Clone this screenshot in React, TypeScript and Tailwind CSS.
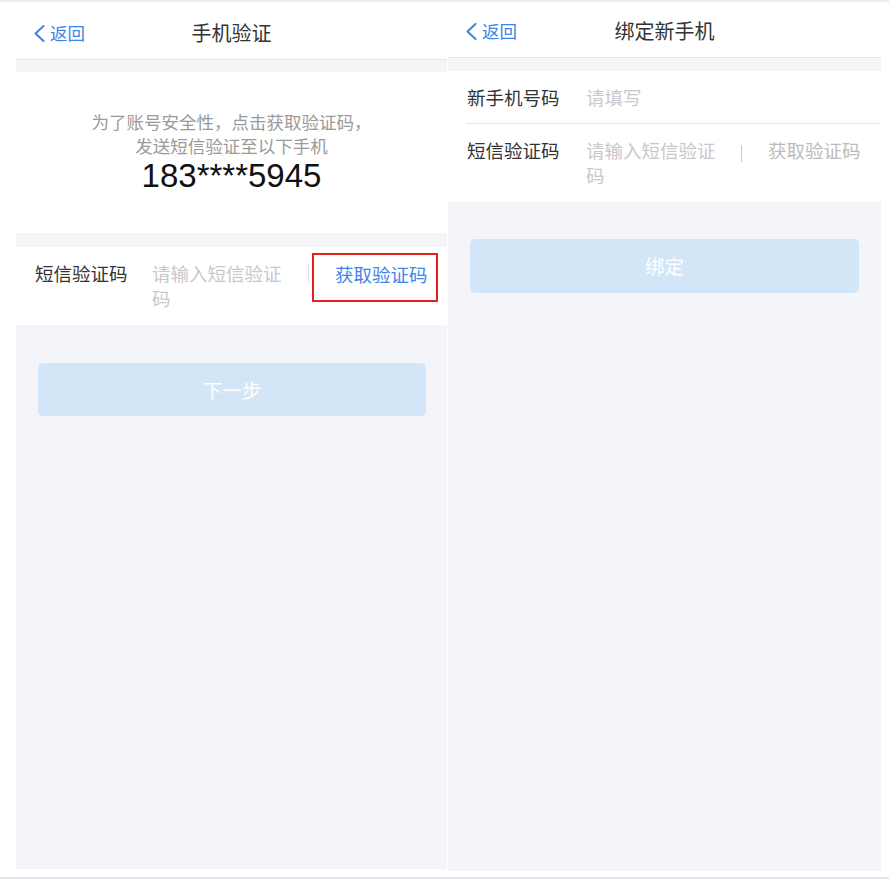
const font = { fontFamily: '"Noto Sans CJK SC", "Noto Sans", sans-serif' };

function BackButton() {
  return (
    <div className="flex items-center gap-[4px] text-[17.5px] text-[#3d85e8]">
      <svg width="13" height="17" viewBox="0 0 13 17" fill="none">
        <polyline points="10.5,1 2.5,8.5 10.5,16" stroke="#3d85e8" strokeWidth="2" strokeLinecap="round" strokeLinejoin="round" />
      </svg>
      <span>返回</span>
    </div>
  );
}

function Header({ title, h, pt }: { title: string; h: string; pt: string }) {
  return (
    <div className={`relative flex items-center bg-white ${h} ${pt}`}>
      <div className="pl-[17px]">
        <BackButton />
      </div>
      <div className="absolute inset-x-0 text-center text-[20px] text-[#333] pointer-events-none">{title}</div>
    </div>
  );
}

export default function App() {
  return (
    <div className="w-[889px] h-[879px] bg-white flex flex-col overflow-hidden" style={font}>
      <div className="h-[3px] bg-gradient-to-b from-[#e6e6e6] to-white" />

      <div className="flex pl-[16px] gap-[1px]">
        {/* Left screen */}
        <div className="w-[431px] h-[866px] flex flex-col bg-[#f4f5f9]">
          <Header title="手机验证" h="h-[56px]" pt="pt-[4px]" />
          <div className="h-[13px] border-t border-[#e4e5eb]" />

          <div className="h-[161px] bg-white flex flex-col items-center pt-[38px]">
            <p className="text-[17.5px] leading-[24px] text-[#9a9a9a]">为了账号安全性，点击获取验证码，</p>
            <p className="text-[17.5px] leading-[24px] text-[#9a9a9a]">发送短信验证至以下手机</p>
            <p className="text-[33px] leading-[36px] text-[#111]" style={{ fontFamily: '"Liberation Sans", Arial, sans-serif' }}>
              183****5945
            </p>
          </div>

          <div className="h-[14px]" />

          <div className="h-[78px] bg-white flex items-start pl-[19px] pt-[6px]">
            <span className="w-[117px] mt-[8px] text-[18.5px] leading-[25px] text-[#333]">短信验证码</span>
            <span className="w-[140px] mt-[8px] text-[18.5px] leading-[25px] text-[#c8c8cc]">请输入短信验证码</span>
            <span className="ml-[16px] w-px h-[19px] mt-[11px] bg-[#e0e0e0]" />
            <span className="ml-[3px] w-[126px] h-[49px] border-2 border-[#e5201c] flex items-center pl-[21px] pb-[5px] text-[18.5px] text-[#3d85e8]">
              获取验证码
            </span>
          </div>

          <div className="mt-[38px] mx-[22px] mr-[21px] h-[53px] rounded-[5px] bg-[#d2e6f8] flex items-center justify-center text-[19.5px] text-white">
            下一步
          </div>
        </div>

        {/* Right screen */}
        <div className="w-[433px] h-[868px] flex flex-col bg-[#f4f5f9]">
          <Header title="绑定新手机" h="h-[54px]" pt="pt-[2px]" />
          <div className="h-[14px] border-t border-[#e4e5eb]" />

          <div className="bg-white">
            <div className="ml-[18px] h-[53px] border-b border-[#e6e6ea] flex items-center pl-[1px] pt-[1px]">
              <span className="w-[119px] text-[18.5px] text-[#333]">新手机号码</span>
              <span className="text-[18.5px] text-[#c8c8cc]">请填写</span>
            </div>
            <div className="h-[78px] flex items-start pl-[19px] pt-[14px]">
              <span className="w-[119px] text-[18.5px] leading-[25px] text-[#333]">短信验证码</span>
              <span className="w-[140px] text-[18.5px] leading-[25px] text-[#c8c8cc]">请输入短信验证码</span>
              <span className="ml-[15px] w-px h-[17px] mt-[7px] bg-[#c8c8cc]" />
              <span className="ml-[26px] text-[18.5px] leading-[25px] text-[#bcbcbc]">获取验证码</span>
            </div>
          </div>

          <div className="mt-[37px] mx-[22px] h-[54px] rounded-[5px] bg-[#d2e6f8] flex items-center justify-center text-[19.5px] text-white">
            绑定
          </div>
        </div>
      </div>

      <div className="mt-auto h-[2px] bg-[#e7e5ee]" />
    </div>
  );
}
